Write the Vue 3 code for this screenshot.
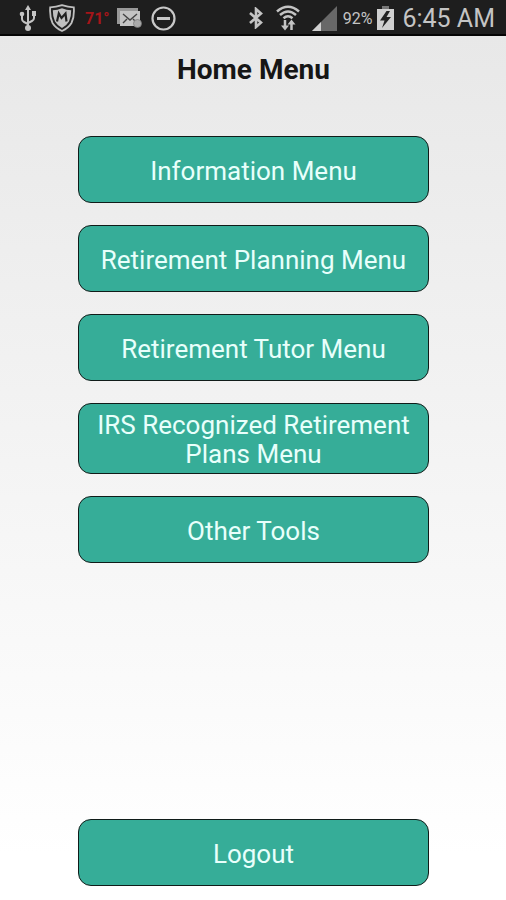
<template>
  <div class="screen">
    <header class="status-bar">
      <div class="notifications">
        <svg class="icon" width="18" height="26" viewBox="0 0 18 26" role="img" aria-label="USB">
          <g fill="none" stroke="#c4c4c4" stroke-width="2">
            <path d="M9 4v18M3 10v4q0 2 2 3l4 2M15 9v4q0 2-2 3l-4 2" />
          </g>
          <path d="M9 0l3 5H6z" fill="#c4c4c4" />
          <circle cx="9" cy="23" r="3" fill="#c4c4c4" />
          <circle cx="3" cy="9" r="2.3" fill="#c4c4c4" />
          <path d="M13 6h4v5h-4z" fill="#c4c4c4" />
        </svg>
        <svg class="icon shield" width="26" height="28" viewBox="0 0 26 28" role="img" aria-label="Security">
          <path d="M13 1.2Q19 3 24.8 3.4 25.5 13 22.5 19 19.5 24 13 27 6.5 24 3.5 19 .5 13 1.2 3.4 7 3 13 1.2z" fill="#222" stroke="#c0c0c0" stroke-width="1.8" />
          <path d="M13 4.2Q17.5 6 22.2 6.3 22.3 13 20 17.5 17.5 21.700 13 24 8.500 21.700 6 17.500 3.700 13 3.800 6.300 8.500 6 13 4.200z" fill="#c0c0c0" />
          <path d="M8 17.500L9.800 9.500 12.500 14 16.500 9.500 17.500 17.500" fill="none" stroke="#222" stroke-width="2.200" />
        </svg>
        <span class="temperature">71°</span>
        <svg class="icon mail" width="25" height="20" viewBox="0 0 25 20" role="img" aria-label="New mail">
          <path d="M0 0h21v3H3v13H0z" fill="#999" />
          <path d="M3 3h20v15H3z" fill="#c4c4c4" />
          <path d="M6 6l7 6 7-6M6 15l4-4M20 15l-4-4" fill="none" stroke="#444" stroke-width="1.4" />
          <circle cx="20.500" cy="15.500" r="4" fill="#aaa" stroke="#777" stroke-width=".7" />
        </svg>
        <svg class="icon" width="25" height="25" viewBox="0 0 25 25" role="img" aria-label="Do not disturb">
          <circle cx="12.500" cy="12.500" r="11" fill="none" stroke="#c8c8c8" stroke-width="2.2" />
          <path d="M6 11h13v3H6z" fill="#c8c8c8" />
        </svg>
      </div>

      <div class="system">
        <svg class="icon" width="16" height="22" viewBox="0 0 16 22" role="img" aria-label="Bluetooth">
          <path d="M2 6l11 9.500L8 20V2l5 4.500L2 16" fill="none" stroke="#c4c4c4" stroke-width="2.600" />
        </svg>
        <svg class="icon wifi" width="26" height="26" viewBox="0 0 26 26" role="img" aria-label="Wi-Fi">
          <g fill="none" stroke="#c4c4c4" stroke-width="2.500">
            <path d="M2 6.500Q13-3 24 6.500M5 10Q13 3 21 10M8.500 13.300Q13 9.300 17.500 13.300" />
            <path d="M10 15v7M16.500 18v7" />
          </g>
          <path d="M6 20.500h8l-4 5zM12.500 19.500h8l-4-5z" fill="#c4c4c4" />
        </svg>
        <svg class="icon signal" width="25" height="25" viewBox="0 0 25 25" role="img" aria-label="Signal strength">
          <path d="M0 25L25 0v25z" fill="#686868" />
          <path d="M0 25l9-9v9z" fill="#d0d0d0" />
        </svg>
        <span class="percent">92%</span>
        <svg class="icon battery" width="17" height="24" viewBox="0 0 17 24" role="img" aria-label="Charging">
          <path d="M5 0h7v3H5z" fill="#777" />
          <path d="M0 3h17v21H0z" fill="#d0d0d0" />
          <path d="M9.500 5L3 14.500h4.500L5 22l9-11H9.500L13 5z" fill="#222" />
        </svg>
        <time class="clock">6:45 AM</time>
      </div>
    </header>

    <main class="content">
      <h1>Home Menu</h1>
      <nav class="menu">
        <button v-for="item in menuItems" :key="item" type="button">{{ item }}</button>
      </nav>
      <button class="logout" type="button">Logout</button>
    </main>
  </div>
</template>

<script setup>
const menuItems = [
  'Information Menu',
  'Retirement Planning Menu',
  'Retirement Tutor Menu',
  'IRS Recognized Retirement Plans Menu',
  'Other Tools',
];
</script>

<style>
body {
  margin: 0;
}
</style>

<style scoped>
.screen {
  display: flex;
  flex-direction: column;
  min-height: 100vh;
  font-family: Roboto, "Noto Sans", sans-serif;
  background: linear-gradient(#e7e7e7, #fff 95%);
}

.status-bar {
  display: flex;
  justify-content: space-between;
  align-items: center;
  box-sizing: border-box;
  height: 36px;
  padding: 2px 11px 0 19px;
  background: #1e1e1e;
  border-bottom: 2px solid #050505;
  color: #c4c4c4;
}

.notifications,
.system {
  display: flex;
  align-items: center;
  white-space: nowrap;
}

.icon {
  flex: none;
}

.shield {
  margin-left: 12px;
}

.temperature {
  width: 22px;
  margin: 0 10px;
  font-size: 16px;
  font-weight: 700;
  color: #a51519;
}

.mail {
  margin-right: 9px;
}

.wifi {
  margin: 0 11px;
}

.percent {
  margin: 0 5px 0 6px;
  font-size: 16px;
}

.battery {
  margin-right: 8px;
}

.clock {
  font-size: 25px;
}

.content {
  display: flex;
  flex: 1;
  flex-direction: column;
  padding: 16px 77px 14px 78px;
}

h1 {
  margin: 0 0 48px;
  font-size: 28px;
  line-height: 36px;
  text-align: center;
  color: #161616;
}

.menu {
  display: flex;
  flex-direction: column;
  gap: 22px;
}

/* menu entries and logout share the same look */
button {
  min-height: 67px;
  padding: 7px 16px 4px;
  border: 1px solid #101c19;
  border-radius: 13px;
  background: #36ad98;
  color: #e8fffb;
  font-family: inherit;
  font-size: 26px;
  line-height: 29px;
}

.logout {
  margin-top: auto;
}
</style>
